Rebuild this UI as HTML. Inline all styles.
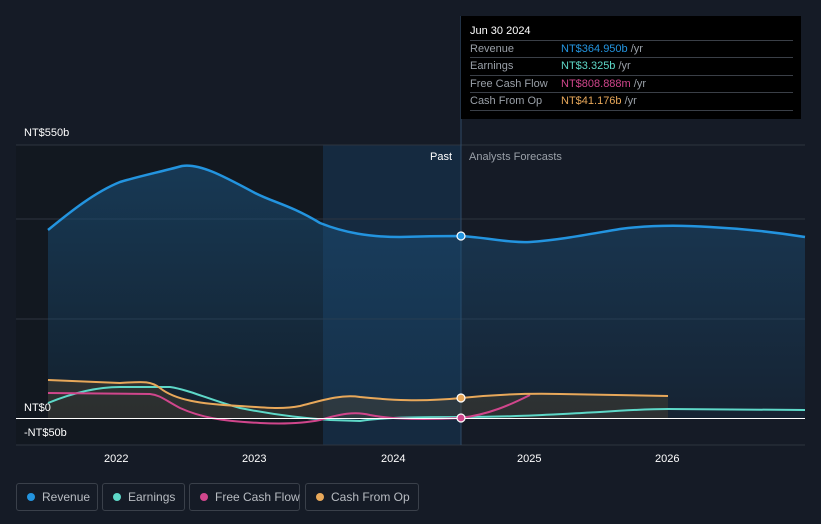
<!DOCTYPE html>
<html><head><style>
body{margin:0;width:821px;height:524px;background:#151b26;font-family:"Liberation Sans",sans-serif;overflow:hidden;position:relative}
.tt{position:absolute;left:461px;top:16px;width:340px;height:103px;background:#000;color:#fff;font-size:11px}
.tt .h{position:absolute;left:9px;top:9px;font-size:11px}
.row{position:absolute;left:9px;width:323px;border-top:1px solid #3a3f47;height:17px;line-height:17px;color:#9aa0a8}
.row span{position:absolute;left:91px}
.lg{position:absolute;top:483px;height:28px;border:1px solid #3a404a;border-radius:3px;color:#b8bcc2;font-size:12px;line-height:26px;box-sizing:border-box;padding-left:25px;white-space:nowrap}
.lg i{position:absolute;left:10px;top:9px;width:8px;height:8px;border-radius:50%}
</style></head><body>
<svg width="821" height="524" style="position:absolute;left:0;top:0">
<defs>
<linearGradient id="bl" x1="0" y1="0" x2="0" y2="1"><stop offset="0" stop-color="#1b4f78" stop-opacity=".6"/><stop offset="1" stop-color="#1b4f78" stop-opacity=".15"/></linearGradient>
</defs>
<rect x="16" y="145" width="307" height="300" fill="#121820"/>
<rect x="323" y="145" width="138" height="300" fill="#152a40"/>
<line x1="16" y1="145" x2="805" y2="145" stroke="#2d343f"/>
<line x1="16" y1="219" x2="805" y2="219" stroke="#2d343f"/>
<line x1="16" y1="319" x2="805" y2="319" stroke="#2d343f"/>
<line x1="16" y1="445" x2="805" y2="445" stroke="#2d343f"/>
<line x1="461" y1="16" x2="461" y2="445" stroke="#2e4a66"/>
<path d="M48 230 C70 212,95 192,120 182 C140 176,160 172,182 166 C200 163,225 177,255 193 C275 203,290 205,320 223 C345 233,370 237,400 237 C430 236,450 236,461 236 C490 238,510 243,530 242 C560 240,590 234,620 229 C650 225,680 225,710 227 C750 229,780 233,805 237 L805 418 L48 418Z" fill="url(#bl)"/>
<path d="M48 230 C70 212,95 192,120 182 C140 176,160 172,182 166 C200 163,225 177,255 193 C275 203,290 205,320 223 C345 233,370 237,400 237 C430 236,450 236,461 236 C490 238,510 243,530 242 C560 240,590 234,620 229 C650 225,680 225,710 227 C750 229,780 233,805 237" fill="none" stroke="#2394df" stroke-width="2.5"/>
<path d="M48 380 L120 383 C140 382,150 380,160 388 C175 400,200 404,240 406 C260 407,280 410,300 406 C320 401,340 394,360 397 C390 400,420 402,461 398 C490 395,520 393,560 394 L668 396 L668 418 L48 418Z" fill="#5a4a30" opacity=".35"/>
<path d="M48 403 C70 394,95 387,120 387 L170 387 C190 390,210 400,240 408 C270 414,300 418,330 420 L360 421 C380 418,400 417,461 417 C520 417,560 414,600 412 C630 410,650 409,668 409 L805 410" fill="none" stroke="#5ed8c8" stroke-width="2"/>
<path d="M48 393 L150 394 C160 395,165 400,180 408 C200 417,220 421,260 423 C280 424,300 424,320 420 C340 414,355 411,370 415 C390 419,420 420,461 418 C490 414,510 405,530 395" fill="none" stroke="#d0468c" stroke-width="2"/>
<path d="M48 380 L120 383 C140 382,150 380,160 388 C175 400,200 404,240 406 C260 407,280 410,300 406 C320 401,340 394,360 397 C390 400,420 402,461 398 C490 395,520 393,560 394 L668 396" fill="none" stroke="#e8a85a" stroke-width="2"/>
<line x1="16" y1="418.5" x2="805" y2="418.5" stroke="#fff" stroke-width="1"/>
<circle cx="461" cy="236" r="4" fill="#2394df" stroke="#fff" stroke-width="1.2"/>
<circle cx="461" cy="398" r="4" fill="#e8a85a" stroke="#fff" stroke-width="1.2"/>
<circle cx="461" cy="418" r="4" fill="#d0468c" stroke="#fff" stroke-width="1.2"/>
<g font-size="11" fill="#fff">
<text x="24" y="136">NT$550b</text><text x="24" y="411">NT$0</text><text x="24" y="436">-NT$50b</text>
<text x="104" y="462">2022</text><text x="242" y="462">2023</text><text x="381" y="462">2024</text><text x="517" y="462">2025</text><text x="655" y="462">2026</text>
<text x="430" y="160">Past</text><text x="469" y="160" fill="#9aa0a8">Analysts Forecasts</text>
</g>
</svg>
<div class="tt"><div class="h">Jun 30 2024</div>
<div class="row" style="top:24px">Revenue<span style="color:#2394df">NT$364.950b <b style="font-weight:normal;color:#9aa0a8">/yr</b></span></div>
<div class="row" style="top:41px">Earnings<span style="color:#5ed8c8">NT$3.325b <b style="font-weight:normal;color:#9aa0a8">/yr</b></span></div>
<div class="row" style="top:59px">Free Cash Flow<span style="color:#d0468c">NT$808.888m <b style="font-weight:normal;color:#9aa0a8">/yr</b></span></div>
<div class="row" style="top:76px;border-bottom:1px solid #3a3f47">Cash From Op<span style="color:#e8a85a">NT$41.176b <b style="font-weight:normal;color:#9aa0a8">/yr</b></span></div>
</div>
<div class="lg" style="left:16px;width:82px"><i style="background:#2394df"></i>Revenue</div>
<div class="lg" style="left:102px;width:83px"><i style="background:#5ed8c8"></i>Earnings</div>
<div class="lg" style="left:189px;width:111px"><i style="background:#d0468c"></i>Free Cash Flow</div>
<div class="lg" style="left:305px;width:114px"><i style="background:#e8a85a"></i>Cash From Op</div>
</body></html>
